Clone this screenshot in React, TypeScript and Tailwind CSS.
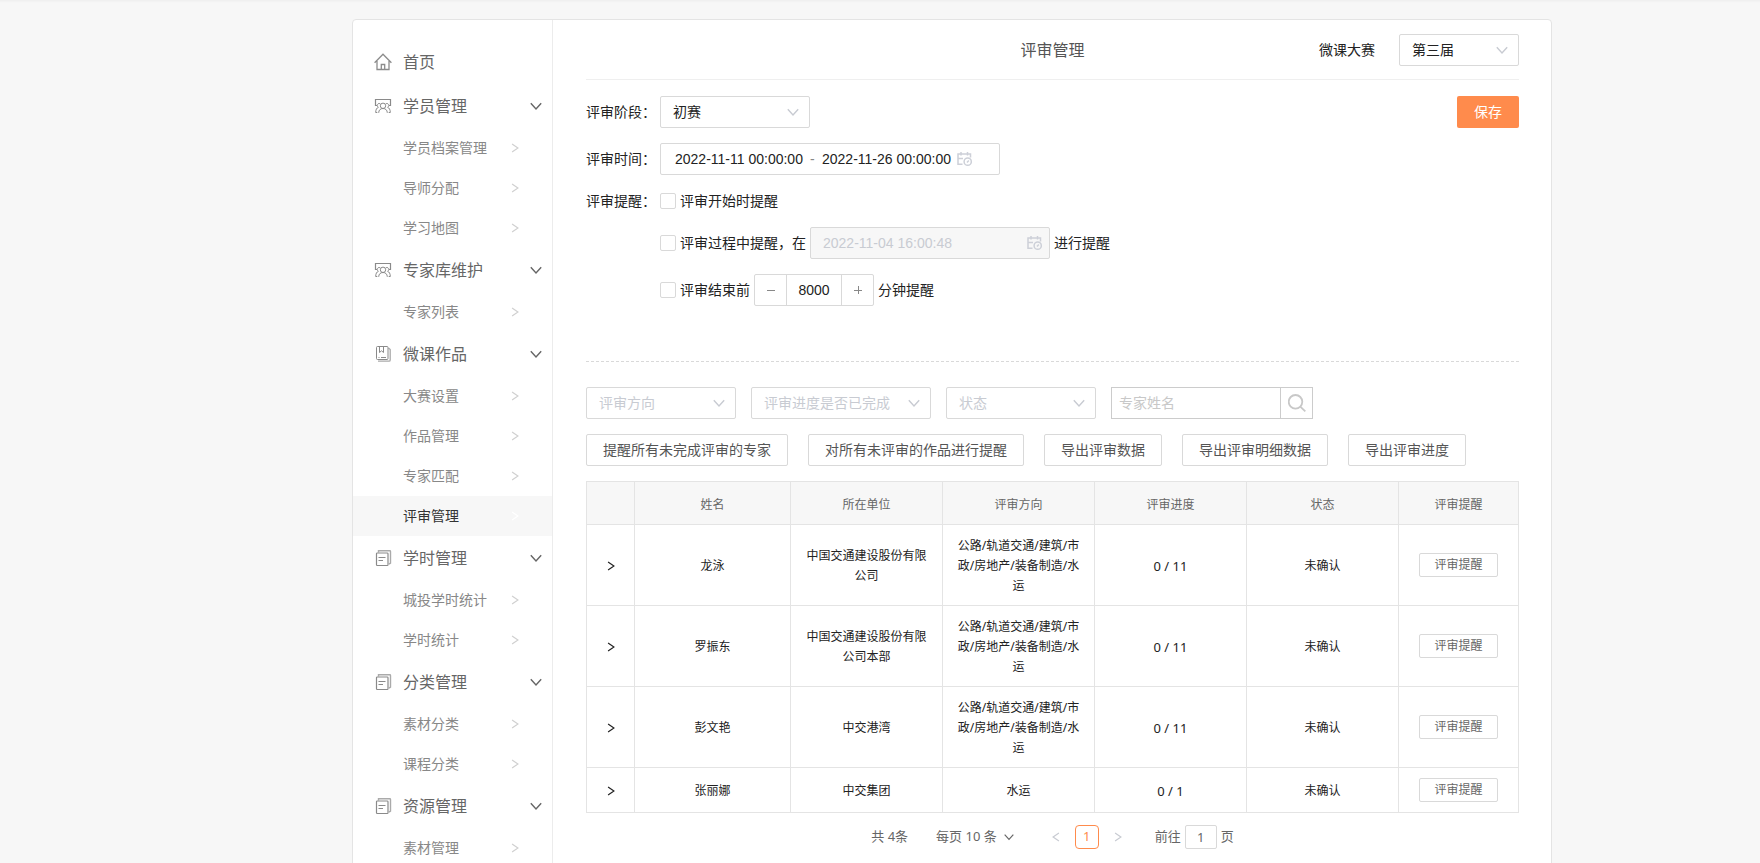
import { useState, type ReactNode } from "react";

type SidebarGroup = {
  title: string;
  icon: "team" | "book" | "doc";
  items: string[];
};

const groups: SidebarGroup[] = [
  { title: "学员管理", icon: "team", items: ["学员档案管理", "导师分配", "学习地图"] },
  { title: "专家库维护", icon: "team", items: ["专家列表"] },
  {
    title: "微课作品",
    icon: "book",
    items: ["大赛设置", "作品管理", "专家匹配", "评审管理"],
  },
  { title: "学时管理", icon: "doc", items: ["城投学时统计", "学时统计"] },
  { title: "分类管理", icon: "doc", items: ["素材分类", "课程分类"] },
  { title: "资源管理", icon: "doc", items: ["素材管理"] },
];

const allDirections = "公路/轨道交通/建筑/市政/房地产/装备制造/水运";

const experts = [
  { name: "龙泳", company: "中国交通建设股份有限公司", direction: allDirections, progress: "0 / 11", status: "未确认" },
  { name: "罗振东", company: "中国交通建设股份有限公司本部", direction: allDirections, progress: "0 / 11", status: "未确认" },
  { name: "彭文艳", company: "中交港湾", direction: allDirections, progress: "0 / 11", status: "未确认" },
  { name: "张丽娜", company: "中交集团", direction: "水运", progress: "0 / 1", status: "未确认" },
];

const actions = [
  "提醒所有未完成评审的专家",
  "对所有未评审的作品进行提醒",
  "导出评审数据",
  "导出评审明细数据",
  "导出评审进度",
];

function Chevron({ dir, className }: { dir: "down" | "left" | "right"; className: string }) {
  const d = {
    down: "M.8 3.2 6 9l5.200-5.800",
    left: "M9.500 1.200 2.500 6l7 4.800",
    right: "M2.500 1.200 9.500 6l-7 4.800",
  }[dir];
  return (
    <svg viewBox="0 0 12 12" className={className} fill="none" stroke="currentColor" strokeWidth="1.4" aria-hidden="true">
      <path d={d} />
    </svg>
  );
}

function HomeIcon() {
  return (
    <svg viewBox="0 0 18 18" className="size-[18px] shrink-0" fill="none" stroke="#8c8c8c" strokeWidth="1.3" aria-hidden="true">
      <path d="M.6 9.700 9 1.200l8.400 8.500M3 8v8.500h12V8M7.300 16.500v-5h3.400v5" />
    </svg>
  );
}

function GroupIcon({ name }: { name: SidebarGroup["icon"] }) {
  return (
    <svg viewBox="0 0 18 18" className="size-[18px] shrink-0" fill="none" stroke="#8a8a8a" aria-hidden="true">
      {name === "team" && (
        <>
          <path d="M3 8.500H1.500v-6h15v6H15" strokeWidth="1.200" />
          <circle cx="9" cy="8.800" r="2.700" />
          <path d="M4.700 15.800c0-2.800 1.900-4.300 4.300-4.300s4.300 1.500 4.300 4.300M6.300 6.800C4.700 5.900 3.200 7 3.200 8.400c0 .9.500 1.500 1.200 1.900-1.700.6-2.700 2.400-2.700 5.200h1.600M11.700 6.800c1.600-.9 3.100.2 3.100 1.600 0 .9-.5 1.500-1.200 1.900 1.700.6 2.700 2.400 2.700 5.200h-1.600" />
        </>
      )}
      {name === "book" && (
        <>
          <path d="M4 16.200h11a1.200 1.200 0 0 0 1.200-1.200V4.500L14.500 3" stroke="#aaa" strokeWidth="1.300" />
          <rect x="2.500" y="1.500" width="11.500" height="13" rx="1" />
          <path d="M5.500 1.500v6l2-1.700 2 1.700v-6M4.500 12.500h1M7 12.500h5" />
        </>
      )}
      {name === "doc" && (
        <>
          <path d="M4.500 3.500V1.700h11.300a.7.7 0 0 1 .7.700v11.800l-1.500 1" stroke="#aaa" strokeWidth="1.400" />
          <rect x="2.500" y="4" width="11.500" height="12.500" rx=".8" strokeWidth="1.200" />
          <path d="M4.500 8.500h7M4.500 11.500h4.500" />
        </>
      )}
    </svg>
  );
}

function CalendarClock() {
  return (
    <svg viewBox="0 0 16 16" className="size-4 shrink-0 text-[#cdd0d8]" fill="none" stroke="currentColor" strokeWidth="1.500" aria-hidden="true">
      <path d="M6.500 13.300H2V3h12.500v3.500M5 1v3.500M11.500 1v3.500M2 7.500h5" />
      <circle cx="11.700" cy="10.700" r="3.600" />
      <path d="m11 11.500 1.800-1.900" />
    </svg>
  );
}

function SelectBox({ label, value, width }: { label: string; value: string; width: string }) {
  const placeholder = label === value;
  return (
    <div className={`relative h-8 ${width}`}>
      <select
        aria-label={label}
        className={`size-full appearance-none rounded-xs border border-[#d9d9d9] bg-white pr-8 pl-3 text-sm outline-none ${
          placeholder ? "text-[#c8cbd2]" : "text-[#222]"
        }`}
      >
        <option>{value}</option>
      </select>
      <Chevron dir="down" className="pointer-events-none absolute top-2.5 right-[11px] size-3 text-[#c8cbd2]" />
    </div>
  );
}

function Check({ children }: { children: ReactNode }) {
  return (
    <label className="flex items-center gap-1">
      <input type="checkbox" className="size-4 appearance-none rounded-xs border border-[#d9d9d9] checked:bg-[#ff8b4c]" />
      {children}
    </label>
  );
}

function Sidebar() {
  const [active, setActive] = useState("评审管理");
  return (
    <nav className="w-[200px] shrink-0 border-r border-[#ececec] pt-5">
      <a href="#home" className="flex h-11 items-center gap-[11px] pl-[21px] text-base text-[#666]">
        <HomeIcon />
        首页
      </a>
      {groups.map((group) => (
        <div key={group.title}>
          <button type="button" className="flex h-11 w-full items-center gap-[11px] pr-2.5 pl-[21px] text-base text-[#666]">
            <GroupIcon name={group.icon} />
            {group.title}
            <Chevron dir="down" className="ml-auto size-3" />
          </button>
          {group.items.map((item) => (
            <a
              key={item}
              href="#menu"
              onClick={() => setActive(item)}
              className={`flex h-10 items-center justify-between pr-8 pl-[50px] text-sm ${
                item === active ? "bg-[#f7f7f7] text-[#333]" : "text-[#888]"
              }`}
            >
              {item}
              <Chevron dir="right" className={`size-2.5 ${item === active ? "text-white" : "text-[#d0d0d0]"}`} />
            </a>
          ))}
        </div>
      ))}
    </nav>
  );
}

function ReviewForm() {
  const [minutes, setMinutes] = useState(8000);
  return (
    <section className="flex items-start justify-between border-b border-dashed border-[#d9d9d9] pt-4 pb-[55px] text-sm text-[#222]">
      <div>
        <div className="mb-[15px] flex h-8 items-center gap-1">
          评审阶段：
          <SelectBox label="评审阶段" value="初赛" width="w-[150px]" />
        </div>
        <div className="mb-4 flex h-8 items-center gap-1">
          评审时间：
          <div className="flex h-8 w-[340px] items-center rounded-xs border border-[#d9d9d9] pl-3.5 font-['Liberation_Sans']">
            <input aria-label="开始时间" defaultValue="2022-11-11 00:00:00" className="w-[129px] outline-none" />
            <span className="w-[18px] pl-1.5 text-[#888]">-</span>
            <input aria-label="结束时间" defaultValue="2022-11-26 00:00:00" className="w-[134px] outline-none" />
            <CalendarClock />
          </div>
        </div>
        <div className="flex gap-1">
          <span className="leading-5">评审提醒：</span>
          <div>
            <div className="flex h-5">
              <Check>评审开始时提醒</Check>
            </div>
            <div className="mt-4 flex h-8 items-center gap-1">
              <Check>评审过程中提醒，在</Check>
              <div className="flex h-8 w-[240px] items-center rounded-xs border border-[#d9d9d9] bg-[#f7f7f7] pr-[7px] pl-3 font-['Liberation_Sans'] text-[#c8cbd2]">
                <input aria-label="提醒时间" disabled defaultValue="2022-11-04 16:00:48" className="min-w-0 flex-1" />
                <CalendarClock />
              </div>
              进行提醒
            </div>
            <div className="mt-[15px] flex h-8 items-center gap-1">
              <Check>评审结束前</Check>
              <div className="flex h-8 w-[120px] items-center rounded-xs border border-[#d9d9d9]">
                <button type="button" aria-label="减少" onClick={() => setMinutes(minutes - 1)} className="flex h-full w-8 items-center justify-center border-r border-[#d9d9d9]">
                  <svg viewBox="0 0 10 10" className="size-2.5" stroke="#888"><path d="M1 5.500h8" /></svg>
                </button>
                <input
                  aria-label="分钟"
                  value={minutes}
                  onChange={(e) => setMinutes(Number(e.target.value))}
                  className="min-w-0 flex-1 text-center font-['Liberation_Sans'] outline-none"
                />
                <button type="button" aria-label="增加" onClick={() => setMinutes(minutes + 1)} className="flex h-full w-8 items-center justify-center border-l border-[#d9d9d9]">
                  <svg viewBox="0 0 10 10" className="size-2.5" stroke="#888"><path d="M1 5.500h8M5.500 1v8" /></svg>
                </button>
              </div>
              分钟提醒
            </div>
          </div>
        </div>
      </div>
      <button type="button" className="h-8 rounded-xs bg-[#ff8b4c] px-[17px] text-white">
        保存
      </button>
    </section>
  );
}

function ExpertTable() {
  return (
    <table className="mt-[15px] w-full table-fixed border-separate border-spacing-0 border-t border-l border-[#e4e4e4] text-center text-xs leading-5 text-[#222]">
      <colgroup>
        <col className="w-12" />
        <col className="w-[156px]" />
        <col />
        <col />
        <col />
        <col />
        <col className="w-[120px]" />
      </colgroup>
      <thead>
        <tr className="h-[43px] bg-[#f7f7f7] text-[#666]">
          {["", "姓名", "所在单位", "评审方向", "评审进度", "状态", "评审提醒"].map((head) => (
            <th key={head} className="border-r border-b border-[#e4e4e4] pt-[3px] font-normal">
              {head}
            </th>
          ))}
        </tr>
      </thead>
      <tbody>
        {experts.map((expert) => (
          <tr key={expert.name}>
            <td className="border-r border-b border-[#e4e4e4]">
              <button type="button" aria-label="展开" className="align-middle">
                <Chevron dir="right" className="size-2.5" />
              </button>
            </td>
            {[expert.name, expert.company, expert.direction, expert.progress, expert.status].map((cell, i) => (
              <td
                key={i}
                className={`border-r border-b border-[#e4e4e4] px-3 pt-[11px] pb-[9px] break-all ${
                  cell === expert.progress ? "text-[13px]" : ""
                }`}
              >
                {cell}
              </td>
            ))}
            <td className="border-r border-b border-[#e4e4e4] py-2.5">
              <button type="button" className="mx-auto block h-6 rounded-xs border border-[#d9d9d9] px-3.5 leading-5 text-[#666]">
                评审提醒
              </button>
            </td>
          </tr>
        ))}
      </tbody>
    </table>
  );
}

function Pagination() {
  return (
    <div className="mt-3 flex h-6 items-center justify-center text-[13px] text-[#666]">
      <span>共 4条</span>
      <button type="button" className="ml-7 flex items-center gap-[7px]">
        每页 10 条
        <Chevron dir="down" className="size-2.5" />
      </button>
      <button type="button" aria-label="上一页" className="ml-[37px] text-[#c8cbd2]">
        <Chevron dir="left" className="size-2.5" />
      </button>
      <button type="button" className="mx-3.5 size-6 rounded border border-[#ff8b4c] text-[#ff8b4c]">1</button>
      <button type="button" aria-label="下一页" className="text-[#c8cbd2]">
        <Chevron dir="right" className="size-2.5" />
      </button>
      <label className="ml-8 flex items-center gap-1">
        前往
        <input defaultValue="1" className="h-6 w-8 rounded-xs border border-[#d9d9d9] text-center outline-none" />
        页
      </label>
    </div>
  );
}

export default function App() {
  return (
    <div className="h-screen overflow-hidden bg-[#f7f7f7] pt-[19px] pl-36 font-['Noto_Sans','Noto_Sans_CJK_SC',sans-serif] shadow-[inset_0_5px_3px_-4px_#ececec]">
      <div className="mx-auto flex min-h-full max-w-[1200px] rounded border border-[#e4e4e4] bg-white">
        <Sidebar />
        <main className="min-w-0 flex-1 pr-8 pl-[33px]">
          <header className="grid h-[60px] grid-cols-[1fr_auto_1fr] items-center border-b border-[#efefef]">
            <h1 className="col-start-2 text-base text-[#555]">评审管理</h1>
            <div className="flex items-center justify-end gap-6 text-sm text-[#222]">
              微课大赛
              <SelectBox label="届次" value="第三届" width="w-[120px]" />
            </div>
          </header>

          <ReviewForm />

          {/* Filters */}
          <div className="mt-[25px] flex gap-[15px] text-sm">
            <SelectBox label="评审方向" value="评审方向" width="w-[150px]" />
            <SelectBox label="评审进度是否已完成" value="评审进度是否已完成" width="w-[180px]" />
            <SelectBox label="状态" value="状态" width="w-[150px]" />
            <div className="flex h-8 w-[202px] border border-[#ccc]">
              <input aria-label="专家姓名" placeholder="专家姓名" className="min-w-0 flex-1 pl-[7px] outline-none placeholder:text-[#c8c8c8]" />
              <button type="button" aria-label="搜索" className="flex w-8 items-center justify-center border-l border-[#ccc]">
                <svg viewBox="0 0 18 18" className="size-[18px]" fill="none" stroke="#c8c8c8" strokeWidth="1.800" aria-hidden="true">
                  <circle cx="7.500" cy="7.800" r="6.800" />
                  <path d="m12.300 12.600 5 4.700" />
                </svg>
              </button>
            </div>
          </div>

          {/* Bulk actions */}
          <div className="mt-[15px] flex gap-5">
            {actions.map((action) => (
              <button key={action} type="button" className="h-8 rounded-xs border border-[#d9d9d9] px-4 text-sm whitespace-nowrap text-[#555]">
                {action}
              </button>
            ))}
          </div>

          <ExpertTable />
          <Pagination />
        </main>
      </div>
    </div>
  );
}
